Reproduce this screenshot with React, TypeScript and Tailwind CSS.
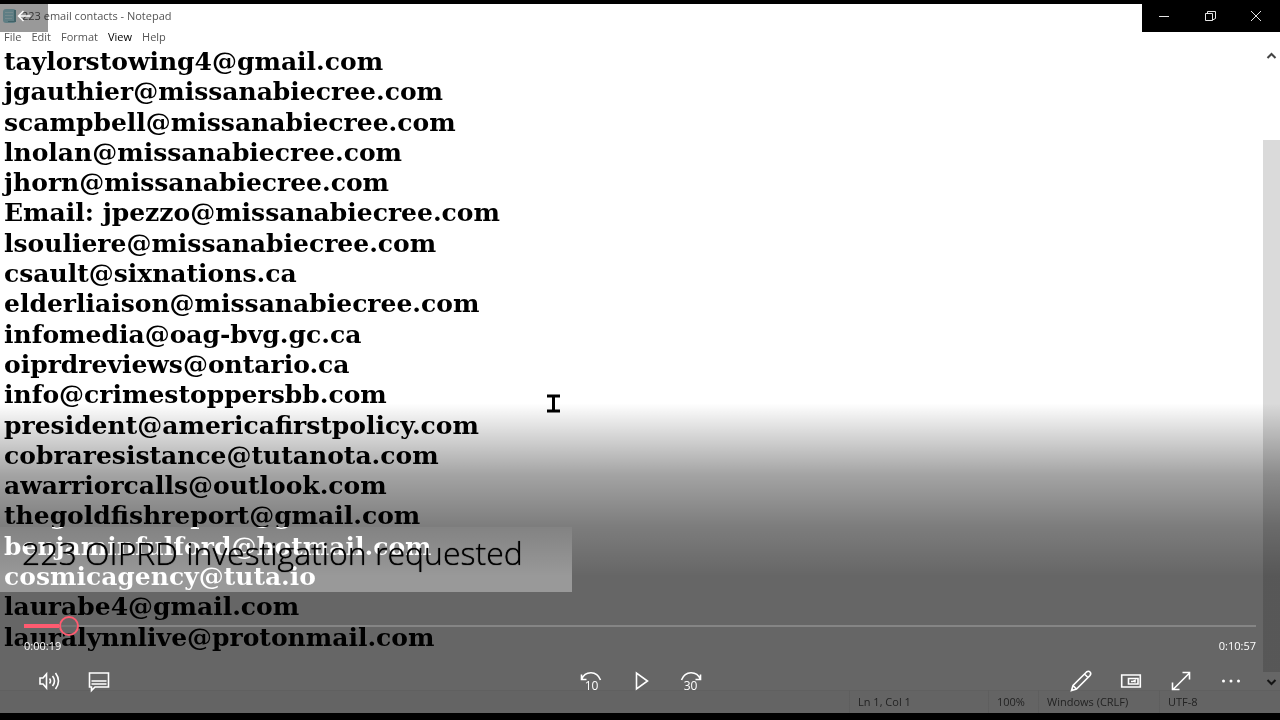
import { useState } from 'react';
import type { ReactNode } from 'react';

const contacts = [
  'taylorstowing4@gmail.com',
  'jgauthier@missanabiecree.com',
  'scampbell@missanabiecree.com',
  'lnolan@missanabiecree.com',
  'jhorn@missanabiecree.com',
  'Email: jpezzo@missanabiecree.com',
  'lsouliere@missanabiecree.com',
  'csault@sixnations.ca',
  'elderliaison@missanabiecree.com',
  'infomedia@oag-bvg.gc.ca',
  'oiprdreviews@ontario.ca',
  'info@crimestoppersbb.com',
  'president@americafirstpolicy.com',
  'cobraresistance@tutanota.com',
  'awarriorcalls@outlook.com',
  'thegoldfishreport@gmail.com',
  'benjaminfulford@hotmail.com',
  'cosmicagency@tuta.io',
  'laurabe4@gmail.com',
  'lauralynnlive@protonmail.com',
];

const DURATION = 657;

function formatTime(seconds: number) {
  const h = Math.floor(seconds / 3600);
  const m = Math.floor((seconds % 3600) / 60);
  const s = seconds % 60;
  return `${h}:${String(m).padStart(2, '0')}:${String(s).padStart(2, '0')}`;
}

function Notepad() {
  return (
    <div className="flex min-h-screen flex-col border-t-4 border-black bg-white text-[#555]">
      <div className="flex h-6 items-center gap-1 pl-[2px] text-[11px]">
        <svg width="16" height="16" viewBox="0 0 16 16">
          <rect x="1" y="1" width="13" height="14" rx="3" fill="#9fd3dc" />
          <path d="M12 2h2v12H6v-1h6z" fill="#6fa5ae" />
          <path d="M3 4.500h8M3 7.500h8M3 10.500h7" stroke="#c4e6ec" />
        </svg>
        223 email contacts - Notepad
      </div>
      <div className="flex h-[18px] items-center gap-[10px] pl-1 text-[11px]">
        <button>File</button>
        <button>Edit</button>
        <button>Format</button>
        <button className="text-black">View</button>
        <button>Help</button>
      </div>
      <div className="flex flex-1">
        <ul className="flex flex-1 flex-col pt-[1px] pb-[37px] pl-1 font-['DejaVu_Serif',serif] text-[25px] leading-[30px] font-bold text-black">
          {contacts.map((contact) => (
            <li key={contact} className="flex-1">{contact}</li>
          ))}
        </ul>
        <div className="flex w-[17px] flex-col items-center">
          <svg width="17" height="18" viewBox="0 0 17 18" fill="none" stroke="#444" strokeWidth="2">
            <path d="M4.500 12 8.500 8l4 4" />
          </svg>
          <div className="mt-[76px] w-full flex-1 bg-[#dadada]" />
          <svg width="17" height="18" viewBox="0 0 17 18" fill="none" stroke="#333" strokeWidth="2">
            <path d="M4.500 8l4 4 4-4" />
          </svg>
        </div>
      </div>
      <div className="flex h-[23px] items-center justify-end border-t border-[#f0f0f0] bg-[#fafafa] text-[11px] leading-6">
        <span className="w-[139px] border-l border-[#ececec] pl-2">Ln 1, Col 1</span>
        <span className="w-[50px] border-l border-[#ececec] pl-2">100%</span>
        <span className="w-[121px] border-l border-[#ececec] pl-2">Windows (CRLF)</span>
        <span className="w-[121px] border-l border-[#ececec] pl-2">UTF-8</span>
      </div>
      <div className="h-[7px] bg-black" />
    </div>
  );
}

function IconButton({ label, children }: { label: string; children: ReactNode }) {
  return (
    <button aria-label={label} className="flex h-[50px] w-[50px] items-center justify-center">
      <svg width="24" height="24" viewBox="0 0 24 24" fill="none" stroke="white" strokeWidth="1.6">
        {children}
      </svg>
    </button>
  );
}

function WindowButton({ label, children }: { label: string; children: ReactNode }) {
  return (
    <button aria-label={label} className="flex h-8 w-[46px] items-center justify-center bg-black">
      <svg width="12" height="12" viewBox="0 0 12 12" fill="none" stroke="white" strokeWidth="0.9">
        {children}
      </svg>
    </button>
  );
}

function SeekBar({ time, onChange }: { time: number; onChange: (time: number) => void }) {
  return (
    <div className="relative flex h-5 items-center">
      <div className="h-[2px] w-full bg-[#858585]" />
      <div
        className="absolute left-0 h-1 bg-[#ff5b70]"
        style={{ width: `calc((100% - 20px) * ${time / DURATION})` }}
      />
      <input
        type="range"
        aria-label="Seek"
        min={0}
        max={DURATION}
        value={time}
        onChange={(e) => onChange(Number(e.target.value))}
        className="absolute inset-0 m-0 h-5 w-full appearance-none bg-transparent [&::-webkit-slider-thumb]:h-5 [&::-webkit-slider-thumb]:w-5 [&::-webkit-slider-thumb]:appearance-none [&::-webkit-slider-thumb]:rounded-full [&::-webkit-slider-thumb]:border-2 [&::-webkit-slider-thumb]:border-[#ff5b70] [&::-webkit-slider-thumb]:bg-[#666]/50"
      />
    </div>
  );
}

export default function App() {
  const [time, setTime] = useState(19);

  return (
    <main className="relative font-['Open_Sans',sans-serif]">
      <Notepad />

      {/* mouse pointer recorded in the video */}
      <svg className="absolute top-[394px] left-[547px]" width="13" height="19" viewBox="0 0 13 19" fill="none" stroke="black" strokeWidth="3">
        <path d="M0 2h13M6.500 2v15M0 17h13" />
      </svg>

      <div className="absolute inset-0 flex flex-col justify-between bg-[linear-gradient(to_bottom,transparent_56%,rgb(0_0_0/0.36)_66%,rgb(0_0_0/0.51)_73%,rgb(0_0_0/0.6)_80%)]">
        <div className="flex justify-between">
          <button aria-label="Back" className="flex h-8 w-12 items-center justify-center bg-black/40">
            <svg width="14" height="12" viewBox="0 0 14 12" fill="none" stroke="white" strokeWidth="1.500">
              <path d="M13.500 6H1.500M6.500 1 1.500 6l5 5" />
            </svg>
          </button>
          <div className="flex">
            <WindowButton label="Minimize">
              <path d="M0 6.500h10" />
            </WindowButton>
            <WindowButton label="Restore">
              <path d="M.5 3.500h7v7h-7zM2.500 3.500v-2h8v7l-3 1.500" />
            </WindowButton>
            <WindowButton label="Close">
              <path d="M0 1l10 10M10 1 0 11" />
            </WindowButton>
          </div>
        </div>

        <div>
          <h1 className="mb-6 w-fit pt-1 pr-[49px] pb-[17px] pl-[22px] text-[32px] leading-[44px] font-light text-black backdrop-invert [text-shadow:0_0_1px_black]">
            223 OIPRD investigation requested
          </h1>
          <div className="px-6">
            <SeekBar time={time} onChange={setTime} />
            <div className="flex justify-between text-[11px] leading-5 text-white">
              <span>{formatTime(time)}</span>
              <span>{formatTime(DURATION)}</span>
            </div>
            <div className="grid grid-cols-[1fr_auto_1fr] pb-[14px]">
              <div className="flex">
                <IconButton label="Volume">
                  <path d="M3 9h3l3.500-4v14L6 15H3z" />
                  <path d="M12.500 9.500q2 2.500 0 5M15.500 7q4 5 0 10M18.500 4q6 8 0 16" />
                </IconButton>
                <IconButton label="Subtitles">
                  <path d="M2.500 4h19v14H8l-3.500 3.500V18h-2z" />
                  <path d="M4.500 12h15M4.500 15h15" />
                </IconButton>
              </div>
              <div className="flex">
                <IconButton label="Skip back 10 seconds">
                  <path d="M3.500 5.500v5h5M3.500 10.500C7 2 18.500 1 22.500 11" />
                  <text x="13.500" y="21" fill="white" stroke="none" fontSize="12" textAnchor="middle">10</text>
                </IconButton>
                <IconButton label="Play">
                  <path d="M8.500 4v16L19.500 12z" />
                </IconButton>
                <IconButton label="Skip forward 30 seconds">
                  <path d="M22.500 5.500v5h-5M22.500 10.500C19 2 7.500 1 3.500 11" />
                  <text x="12.500" y="21" fill="white" stroke="none" fontSize="12" textAnchor="middle">30</text>
                </IconButton>
              </div>
              <div className="flex justify-end">
                <IconButton label="Edit">
                  <path d="M2.500 21.500 4 16.500 17.500 3q2-1.500 3.500 0t0 3.500L7.500 20zM15.500 5l3.500 3.500M4 16.500 7.500 20" />
                </IconButton>
                <IconButton label="Mini view">
                  <path d="M2.700 6h18.600v12H2.700z" />
                  <path d="M9.500 9.500h9.500v5.500H9.500zM12 12.500h2l2-1v2" />
                </IconButton>
                <IconButton label="Full screen">
                  <path d="M4 20.500 20.500 4M13.500 3.500h7v7M3.500 13.500v7h7" />
                </IconButton>
                <IconButton label="More">
                  <g fill="white" stroke="none">
                    <circle cx="4.500" cy="12" r="1.500" />
                    <circle cx="12" cy="12" r="1.500" />
                    <circle cx="19.500" cy="12" r="1.500" />
                  </g>
                </IconButton>
              </div>
            </div>
          </div>
        </div>
      </div>
    </main>
  );
}
